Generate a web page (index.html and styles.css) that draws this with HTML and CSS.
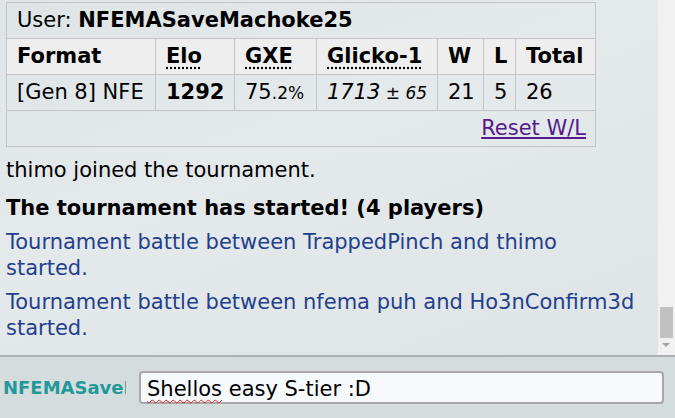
FILE: index.html
```html
<!DOCTYPE html>
<html lang="en">
<head>
<meta charset="UTF-8">
<meta name="viewport" content="width=device-width, initial-scale=1.0">
<title>Chat room</title>
<link rel="stylesheet" href="styles.css">
</head>
<body>

<div class="room">
    <div class="log-area">
        <div class="log">
            <div class="msg table-msg">
                <table class="ladder">
                    <colgroup>
                        <col class="c-format">
                        <col class="c-elo">
                        <col class="c-gxe">
                        <col class="c-glicko">
                        <col class="c-w">
                        <col class="c-l">
                        <col class="c-total">
                    </colgroup>
                    <tr class="user-row">
                        <td colspan="7">User: <strong>NFEMASaveMachoke25</strong></td>
                    </tr>
                    <tr class="head-row">
                        <th>Format</th>
                        <th><abbr title="Elo rating">Elo</abbr></th>
                        <th><abbr title="user's percentage chance of winning a random battle">GXE</abbr></th>
                        <th><abbr title="Glicko-1 rating: rating ± deviation">Glicko-1</abbr></th>
                        <th>W</th>
                        <th>L</th>
                        <th>Total</th>
                    </tr>
                    <tr>
                        <td>[Gen 8] NFE</td>
                        <td><strong>1292</strong></td>
                        <td>75<small>.2%</small></td>
                        <td><em>1713<small> ± 65</small></em></td>
                        <td>21</td>
                        <td>5</td>
                        <td>26</td>
                    </tr>
                    <tr class="reset-row">
                        <td colspan="7"><a href="#">Reset W/L</a></td>
                    </tr>
                </table>
            </div>
            <div class="msg">thimo joined the tournament.</div>
            <div class="msg started"><strong>The tournament has started! (4 players)</strong></div>
            <div class="msg notice">Tournament battle between TrappedPinch and thimo started.</div>
            <div class="msg notice">Tournament battle between nfema puh and Ho3nConfirm3d started.</div>
        </div>
        <div class="scrollbar">
            <div class="thumb"></div>
            <div class="arrow-down"></div>
        </div>
    </div>
    <div class="chatbar">
        <div class="username">NFEMASaveMachoke25</div>
        <div class="textbox"><span class="misspelt">Shellos</span> easy S-tier :D</div>
    </div>
</div>

</body>
</html>
```

FILE: styles.css
```css
body {
    margin: 0;
    font-family: "DejaVu Sans", Verdana, sans-serif;
    font-size: 21px;
    color: #000;
    overflow: hidden;
}
.room {
    width: 675px;
    height: 418px;
    display: flex;
    flex-direction: column;
}
.log-area {
    height: 355px;
    display: flex;
    border-bottom: 2px solid #a9b1b3;
    background: linear-gradient(160deg, #dfe5e7 0%, #e4e9eb 40%, #dfe5e7 100%);
}
.log {
    flex: 1;
    padding: 0 18px 0 6px;
    overflow: hidden;
}
.msg {
    padding: 4px 0;
    line-height: 26px;
}
.table-msg {
    padding: 2px 0 6px;
}
.started {
    margin-top: 4px;
}
.notice {
    color: #243f8c;
}
.ladder {
    border-collapse: collapse;
    table-layout: fixed;
    width: 589px;
    border: 1px solid #c2c4c5;
}
.ladder td,
.ladder th {
    border: 1px solid #c2c4c5;
    height: 36px;
    padding: 0 9px 0 10px;
    line-height: 25px;
    text-align: left;
    white-space: nowrap;
    box-sizing: border-box;
}
.c-format { width: 149px; }
.c-elo { width: 79px; }
.c-gxe { width: 82px; }
.c-glicko { width: 121px; }
.c-w { width: 46px; }
.c-l { width: 32px; }
.c-total { width: 80px; }
.head-row th {
    background: #eeeeee;
}
.ladder abbr {
    text-decoration: underline dotted;
    text-underline-offset: 4px;
}
.ladder small {
    font-size: 17px;
}
.reset-row td {
    text-align: right;
}
.reset-row a {
    color: #551a8b;
}
.scrollbar {
    width: 17px;
    background: #f1f1f1;
    position: relative;
}
.thumb {
    position: absolute;
    left: 2px;
    right: 2px;
    top: 307px;
    height: 31px;
    background: #c1c1c1;
}
.arrow-down {
    position: absolute;
    left: 4px;
    top: 343px;
    border-left: 4px solid transparent;
    border-right: 4px solid transparent;
    border-top: 4px solid #a3a3a3;
}
.chatbar {
    flex: 1;
    display: flex;
    align-items: center;
    padding: 0 11px 0 3px;
    gap: 13px;
    background: #d5dcde;
}
.username {
    width: 123px;
    overflow: hidden;
    white-space: nowrap;
    font-size: 18px;
    font-weight: bold;
    color: #23989a;
}
.textbox {
    flex: 1;
    height: 29px;
    line-height: 32px;
    padding: 0 6px;
    border: 2px solid #a8a8a8;
    border-radius: 4px;
    background: #f6fafd;
    white-space: nowrap;
}
.misspelt {
    text-decoration: underline wavy #e02020;
    text-decoration-thickness: 1px;
    text-underline-offset: 3px;
}
```
